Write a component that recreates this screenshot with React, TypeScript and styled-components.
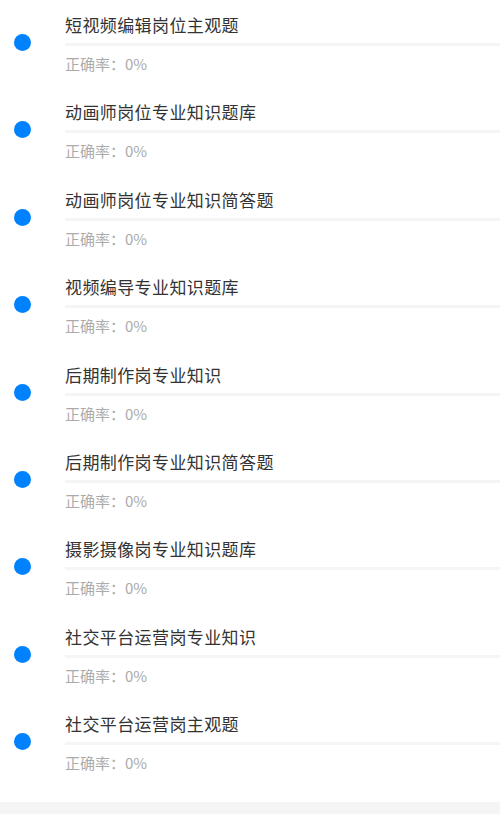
import styled, { createGlobalStyle } from 'styled-components';

const GlobalStyle = createGlobalStyle`
  html, body {
    margin: 0;
    padding: 0;
    background: #ffffff;
    font-family: "Noto Sans CJK SC", "Noto Sans", sans-serif;
  }
`;

const items = [
  '短视频编辑岗位主观题',
  '动画师岗位专业知识题库',
  '动画师岗位专业知识简答题',
  '视频编导专业知识题库',
  '后期制作岗专业知识',
  '后期制作岗专业知识简答题',
  '摄影摄像岗专业知识题库',
  '社交平台运营岗专业知识',
  '社交平台运营岗主观题',
];

function App() {
  return (
    <>
      <GlobalStyle />
      <Page>
        <List>
          {items.map((title) => (
            <Item key={title}>
              <Dot />
              <Body>
                <Title>{title}</Title>
                <Track>
                  <Fill style={{ width: '0%' }} />
                </Track>
                <Rate>正确率：0%</Rate>
              </Body>
            </Item>
          ))}
        </List>
        <Footer />
      </Page>
    </>
  );
}

const Page = styled.div`
  width: 100%;
  overflow: hidden;
`;

const List = styled.ul`
  list-style: none;
  margin: 0;
  padding: 15px 0 0;
  background: #ffffff;
`;

const Item = styled.li`
  display: grid;
  grid-template-columns: 65px 1fr;
  height: 87.4px;
  box-sizing: border-box;
`;

const Dot = styled.span`
  justify-self: start;
  align-self: start;
  width: 17px;
  height: 17px;
  margin: 19px 0 0 14px;
  border-radius: 50%;
  background: #0082ff;
`;

const Body = styled.div`
  display: flex;
  flex-direction: column;
  min-width: 0;
`;

const Title = styled.div`
  font-size: 17px;
  letter-spacing: 0.4px;
  line-height: 20px;
  color: #333333;
  white-space: nowrap;
`;

const Track = styled.div`
  margin-top: 8px;
  height: 3px;
  background: #f5f5f5;
`;

const Fill = styled.div`
  height: 100%;
  background: #0082ff;
`;

const Rate = styled.div`
  margin-top: 8px;
  font-size: 15px;
  line-height: 20px;
  color: #ababab;
`;

const Footer = styled.div`
  height: 40px;
  background: linear-gradient(#f4f4f4, #f8f8f8);
`;

export default App;
